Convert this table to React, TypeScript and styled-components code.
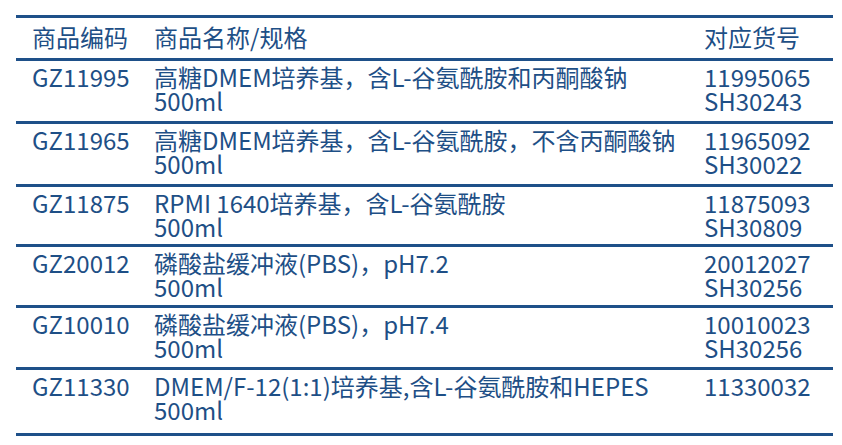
import React from "react"
import styled, { createGlobalStyle } from "styled-components"

const rows = [
  { code: "GZ11995", name: "高糖DMEM培养基，含L-谷氨酰胺和丙酮酸钠", size: "500ml", refs: ["11995065", "SH30243"], h: 60 },
  { code: "GZ11965", name: "高糖DMEM培养基，含L-谷氨酰胺，不含丙酮酸钠", size: "500ml", refs: ["11965092", "SH30022"], h: 60 },
  { code: "GZ11875", name: "RPMI 1640培养基，含L-谷氨酰胺", size: "500ml", refs: ["11875093", "SH30809"], h: 57 },
  { code: "GZ20012", name: "磷酸盐缓冲液(PBS)，pH7.2", size: "500ml", refs: ["20012027", "SH30256"], h: 58 },
  { code: "GZ10010", name: "磷酸盐缓冲液(PBS)，pH7.4", size: "500ml", refs: ["10010023", "SH30256"], h: 59 },
  { code: "GZ11330", name: "DMEM/F-12(1:1)培养基,含L-谷氨酰胺和HEPES", size: "500ml", refs: ["11330032"], h: 63 },
]

const App = () => {
  return (
    <>
      <GlobalStyle />
      <Table>
        <HeaderRow>
          <Cell>商品编码</Cell>
          <Cell>商品名称/规格</Cell>
          <Cell>对应货号</Cell>
        </HeaderRow>
        {rows.map((r) => (
          <Row key={r.code} $h={r.h}>
            <Cell>{r.code}</Cell>
            <Cell>
              {r.name}
              <br />
              {r.size}
            </Cell>
            <Cell>
              {r.refs.map((ref) => (
                <div key={ref}>{ref}</div>
              ))}
            </Cell>
          </Row>
        ))}
      </Table>
    </>
  )
}

const GlobalStyle = createGlobalStyle`
  body {
    margin: 0;
    background: #fff;
  }
`

const Table = styled.div`
  width: 817px;
  margin: 15px 0 0 16px;
  border-top: 3px solid #1e5089;
  font-family: "Noto Sans CJK SC", "Noto Sans", sans-serif;
  font-size: 24px;
  line-height: 24px;
  color: #1e4f86;
`

const HeaderRow = styled.div`
  display: grid;
  grid-template-columns: 122px 550px 1fr;
  height: 40px;
  padding-top: 7px;
  box-sizing: border-box;
  border-bottom: 3px solid #1e5089;
  box-sizing: content-box;
  height: 33px;
`

const Row = styled.div<{ $h: number }>`
  display: grid;
  grid-template-columns: 122px 550px 1fr;
  height: ${(p) => p.$h - 4}px;
  padding-top: 4px;
  border-bottom: 3px solid #1e5089;
`

const Cell = styled.div`
  padding-left: 16px;
  white-space: nowrap;
`

export default App
